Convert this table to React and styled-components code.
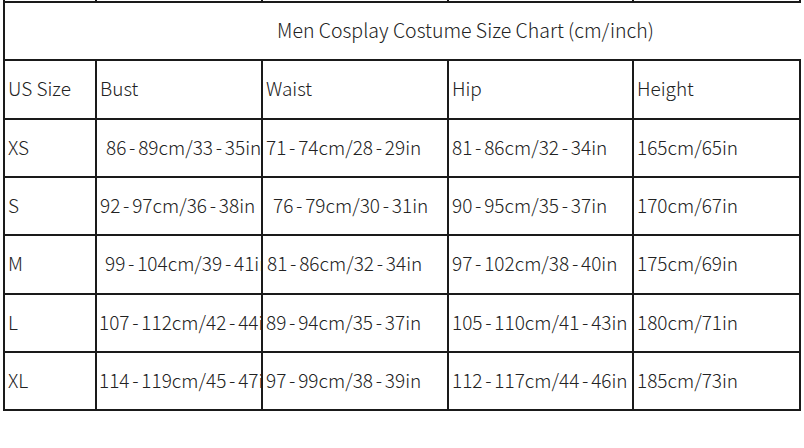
import React from "react";
import styled, { createGlobalStyle } from "styled-components";

const Global = createGlobalStyle`
  html, body { margin: 0; padding: 0; background: #fff; }
  body { font-family: "Noto Sans CJK SC", "Noto Sans", sans-serif; }
`;

const COLS = "92px 166px 186px 185px 167px";
const LINE = "#1a1a1a";

const Page = styled.div`
  width: 804px;
  height: 448px;
  background: #fff;
  overflow: hidden;
`;

const Chart = styled.div`
  margin-left: 3px;
  width: 798px;
`;

const StubRow = styled.div`
  display: grid;
  grid-template-columns: ${COLS};
  height: 1px;
  border-left: 2px solid ${LINE};
`;

const Stub = styled.div`
  border-right: 2px solid ${LINE};
`;

const Table = styled.div`
  display: grid;
  grid-template-columns: ${COLS};
  grid-auto-rows: 58.33px;
  border-top: 2px solid ${LINE};
  border-left: 2px solid ${LINE};
`;

const Title = styled.div`
  grid-column: 1 / -1;
  display: flex;
  align-items: center;
  justify-content: center;
  padding: 0 0 3px 125px;
  box-sizing: border-box;
  border-bottom: 2px solid ${LINE};
  font-size: 19.5px;
  font-weight: 300;
  color: #222;
`;

const Cell = styled.div`
  display: flex;
  align-items: center;
  box-sizing: border-box;
  padding: 0 0 3px ${(p) => 3 + (p.$indent || 0)}px;
  border-right: 2px solid ${LINE};
  border-bottom: 2px solid ${LINE};
  font-size: 19px;
  font-weight: 300;
  color: #222;
  white-space: nowrap;
  overflow: hidden;
`;

const Dash = styled.span`
  padding: 0 2.75px;
`;

const header = ["US Size", "Bust", "Waist", "Hip", "Height"];

const rows = [
  [["XS"], ["86-89cm/33-35in", 6], ["71-74cm/28-29in"], ["81-86cm/32-34in"], ["165cm/65in"]],
  [["S"], ["92-97cm/36-38in"], ["76-79cm/30-31in", 7], ["90-95cm/35-37in"], ["170cm/67in"]],
  [["M"], ["99-104cm/39-41in", 5], ["81-86cm/32-34in", 1], ["97-102cm/38-40in"], ["175cm/69in"]],
  [["L"], ["107-112cm/42-44in", -1], ["89-94cm/35-37in"], ["105-110cm/41-43in"], ["180cm/71in"]],
  [["XL"], ["114-119cm/45-47in", -1], ["97-99cm/38-39in"], ["112-117cm/44-46in"], ["185cm/73in"]],
];

function Value({ text }) {
  const parts = text.split("-");
  return parts.map((p, i) => (
    <React.Fragment key={i}>
      {i > 0 && <Dash>-</Dash>}
      {p}
    </React.Fragment>
  ));
}

export default function App() {
  return (
    <Page>
      <Global />
      <Chart>
        <StubRow>
          {header.map((h) => (
            <Stub key={h} />
          ))}
        </StubRow>
        <Table>
          <Title>Men Cosplay Costume Size Chart (cm/inch)</Title>
          {header.map((h) => (
            <Cell key={h}>{h}</Cell>
          ))}
          {rows.map((r, i) =>
            r.map(([text, indent], j) => (
              <Cell key={`${i}-${j}`} $indent={indent}>
                <Value text={text} />
              </Cell>
            ))
          )}
        </Table>
      </Chart>
    </Page>
  );
}
